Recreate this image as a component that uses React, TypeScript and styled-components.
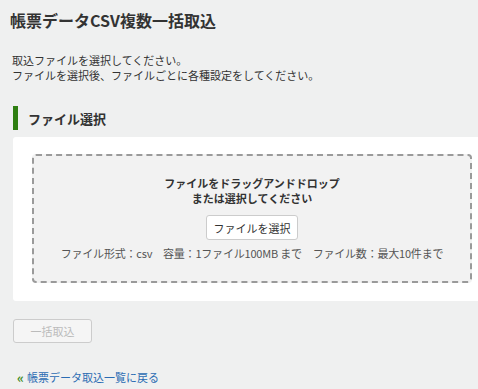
import React from 'react';
import styled, { createGlobalStyle } from 'styled-components';

const GlobalStyle = createGlobalStyle`
  html, body {
    margin: 0;
    padding: 0;
    background: #eff0f0;
    overflow: hidden;
  }
  body {
    font-family: "Noto Sans CJK JP", "Noto Sans", sans-serif;
    color: #333333;
  }
`;

const Page = styled.div`
  width: 478px;
  padding: 10px 0 0 10px;
  box-sizing: border-box;
`;

const Title = styled.h1`
  margin: 0;
  font-size: 16px;
  line-height: 20px;
  font-weight: 700;
  color: #333333;
`;

const Lead = styled.p`
  margin: 23px 0 0 2px;
  font-size: 11px;
  line-height: 15px;
`;

const SectionHeading = styled.h2`
  display: flex;
  align-items: center;
  height: 24px;
  margin: 23px 0 0 3px;
  padding-left: 10px;
  border-left: 5px solid #2f7f12;
  font-size: 13px;
  font-weight: 700;
`;

const Card = styled.div`
  width: 478px;
  margin: 7px 0 0 3px;
  padding: 17px 19px 18px;
  box-sizing: border-box;
  background: #ffffff;
  border-radius: 3px;
`;

const DropZone = styled.div`
  display: flex;
  flex-direction: column;
  align-items: center;
  height: 129px;
  box-sizing: border-box;
  padding-top: 20px;
  background: #f2f2f2;
  border: 2px dashed #9a9a9a;
  border-radius: 4px;
`;

const DropText = styled.div`
  font-size: 11px;
  line-height: 15px;
  font-weight: 700;
  text-align: center;
`;

const SelectButton = styled.button`
  margin-top: 9px;
  width: 92px;
  height: 25px;
  padding: 0;
  background: #ffffff;
  border: 1px solid #cccccc;
  border-radius: 3px;
  font-family: inherit;
  font-size: 11px;
  color: #333333;
`;

const Limits = styled.div`
  margin-top: 6px;
  font-size: 11px;
  line-height: 15px;
  letter-spacing: -0.2px;
  color: #555555;
  white-space: pre;
`;

const ImportButton = styled.button`
  display: block;
  margin: 18px 0 0 3px;
  width: 79px;
  height: 24px;
  padding: 0;
  background: #f5f5f5;
  border: 1px solid #cccccc;
  border-radius: 3px;
  font-family: inherit;
  font-size: 11px;
  color: #bbbbbb;
`;

const BackLink = styled.a`
  display: inline-flex;
  align-items: center;
  gap: 3px;
  margin: 27px 0 0 7px;
  font-size: 11px;
  line-height: 15px;
  color: #2b6cb3;
  text-decoration: none;
`;

const Chevrons = styled.span`
  color: #3f8b24;
  font-size: 13px;
  font-weight: 700;
`;

export default function App() {
  return (
    <Page>
      <GlobalStyle />
      <Title>帳票データCSV複数一括取込</Title>
      <Lead>
        取込ファイルを選択してください。
        <br />
        ファイルを選択後、ファイルごとに各種設定をしてください。
      </Lead>
      <SectionHeading>ファイル選択</SectionHeading>
      <Card>
        <DropZone>
          <DropText>
            ファイルをドラッグアンドドロップ
            <br />
            または選択してください
          </DropText>
          <SelectButton>ファイルを選択</SelectButton>
          <Limits>ファイル形式：csv　容量：1ファイル100MB まで　ファイル数：最大10件まで</Limits>
        </DropZone>
      </Card>
      <ImportButton disabled>一括取込</ImportButton>
      <BackLink href="#">
        <Chevrons>«</Chevrons>
        帳票データ取込一覧に戻る
      </BackLink>
    </Page>
  );
}
